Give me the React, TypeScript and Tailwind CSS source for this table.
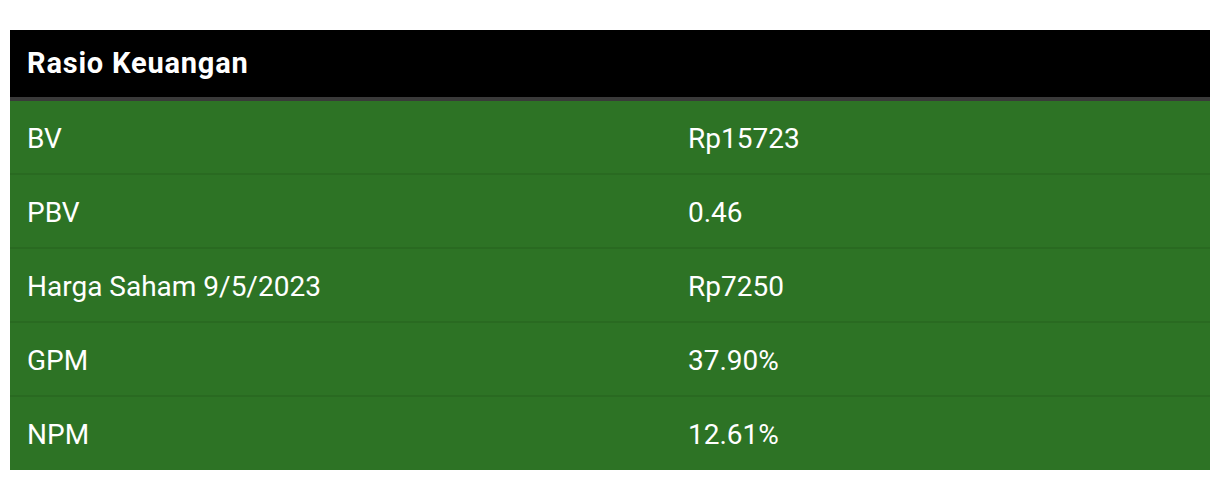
import React from "react";

const rows: [string, string][] = [
  ["BV", "Rp15723"],
  ["PBV", "0.46"],
  ["Harga Saham 9/5/2023", "Rp7250"],
  ["GPM", "37.90%"],
  ["NPM", "12.61%"],
];

export default function App() {
  return (
    <div className="w-[1220px] h-[480px] bg-white pt-[30px] px-[10px]" style={{ fontFamily: "Roboto, 'Noto Sans', sans-serif" }}>
      <div className="w-[1200px]">
        <div className="h-[71px] bg-black border-b-4 border-[#3a3a3a] flex items-center px-[17px]">
          <span className="text-white font-bold text-[29px] tracking-[0.8px] leading-none">Rasio Keuangan</span>
        </div>
        {rows.map(([k, v], i) => (
          <div
            key={k}
            className={`grid grid-cols-[661px_1fr] bg-[#2d7325] text-white text-[28px] font-normal leading-none ${i < rows.length - 1 ? "h-[74px] border-b-2 border-[#296a21]" : "h-[73px]"}`}
          >
            <div className="flex items-center pl-[17px] pt-[3px]">{k}</div>
            <div className="flex items-center pl-[17px] pt-[3px]">{v}</div>
          </div>
        ))}
      </div>
    </div>
  );
}
